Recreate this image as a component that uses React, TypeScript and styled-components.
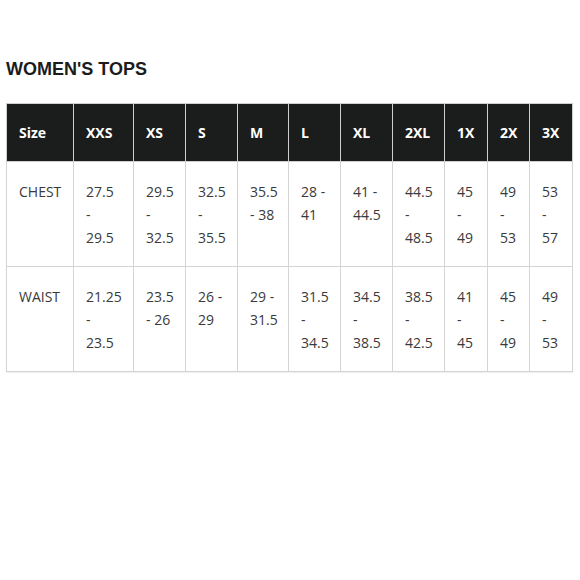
import React from 'react';
import styled, { createGlobalStyle } from 'styled-components';

// ============= 資料 =============

interface SizeColumn {
  label: string;
  width: number;
  chest: string[];
  waist: string[];
}

const columns: SizeColumn[] = [
  { label: 'XXS', width: 60, chest: ['27.5', '-', '29.5'], waist: ['21.25', '-', '23.5'] },
  { label: 'XS', width: 52, chest: ['29.5', '-', '32.5'], waist: ['23.5', '- 26'] },
  { label: 'S', width: 52, chest: ['32.5', '-', '35.5'], waist: ['26 -', '29'] },
  { label: 'M', width: 51, chest: ['35.5', '- 38'], waist: ['29 -', '31.5'] },
  { label: 'L', width: 52, chest: ['28 -', '41'], waist: ['31.5', '-', '34.5'] },
  { label: 'XL', width: 52, chest: ['41 -', '44.5'], waist: ['34.5', '-', '38.5'] },
  { label: '2XL', width: 52, chest: ['44.5', '-', '48.5'], waist: ['38.5', '-', '42.5'] },
  { label: '1X', width: 43, chest: ['45', '-', '49'], waist: ['41', '-', '45'] },
  { label: '2X', width: 42, chest: ['49', '-', '53'], waist: ['45', '-', '49'] },
  { label: '3X', width: 43, chest: ['53', '-', '57'], waist: ['49', '-', '53'] },
];

const rows: { name: string; key: 'chest' | 'waist' }[] = [
  { name: 'CHEST', key: 'chest' },
  { name: 'WAIST', key: 'waist' },
];

// ============= 樣式定義 =============

const GlobalStyle = createGlobalStyle`
  html, body {
    margin: 0;
    padding: 0;
    background: #ffffff;
  }
`;

const Page = styled.div`
  padding: 59px 0 0 6px;
  width: 580px;
  height: 580px;
  box-sizing: border-box;
`;

const Title = styled.h2`
  margin: 0 0 23px 0;
  font-family: 'Liberation Sans', Arial, sans-serif;
  font-size: 18px;
  line-height: 21px;
  font-weight: 700;
  color: #1c1c1c;
`;

const Table = styled.table`
  border-collapse: collapse;
  table-layout: fixed;
  width: 567px;
  font-family: 'Open Sans', 'Noto Sans', sans-serif;
  font-size: 14px;
  box-shadow: 0 1px 1px rgba(0, 0, 0, 0.06);
`;

const HeadCell = styled.th`
  background: #1b1d1c;
  color: #ffffff;
  font-weight: 700;
  text-align: left;
  vertical-align: middle;
  height: 58px;
  padding: 0 0 0 12px;
  line-height: 23px;
  border: 1px solid #cfcfcf;
  box-sizing: border-box;
`;

const BodyCell = styled.td`
  color: #3a3a3a;
  text-align: left;
  vertical-align: top;
  padding: 18px 0 0 12px;
  height: 105px;
  line-height: 23px;
  border: 1px solid #d4d4d4;
  box-sizing: border-box;
`;

const Line = styled.div`
  white-space: nowrap;
`;

// ============= 組件實現 =============

const App: React.FC = () => (
  <>
    <GlobalStyle />
    <Page>
      <Title>WOMEN'S TOPS</Title>
      <Table>
        <colgroup>
          <col style={{ width: 67 }} />
          {columns.map(c => (
            <col key={c.label} style={{ width: c.width }} />
          ))}
        </colgroup>
        <thead>
          <tr>
            <HeadCell>Size</HeadCell>
            {columns.map(c => (
              <HeadCell key={c.label}>{c.label}</HeadCell>
            ))}
          </tr>
        </thead>
        <tbody>
          {rows.map(r => (
            <tr key={r.name}>
              <BodyCell>{r.name}</BodyCell>
              {columns.map(c => (
                <BodyCell key={c.label}>
                  {c[r.key].map((line, i) => (
                    <Line key={i}>{line}</Line>
                  ))}
                </BodyCell>
              ))}
            </tr>
          ))}
        </tbody>
      </Table>
    </Page>
  </>
);

export default App;
